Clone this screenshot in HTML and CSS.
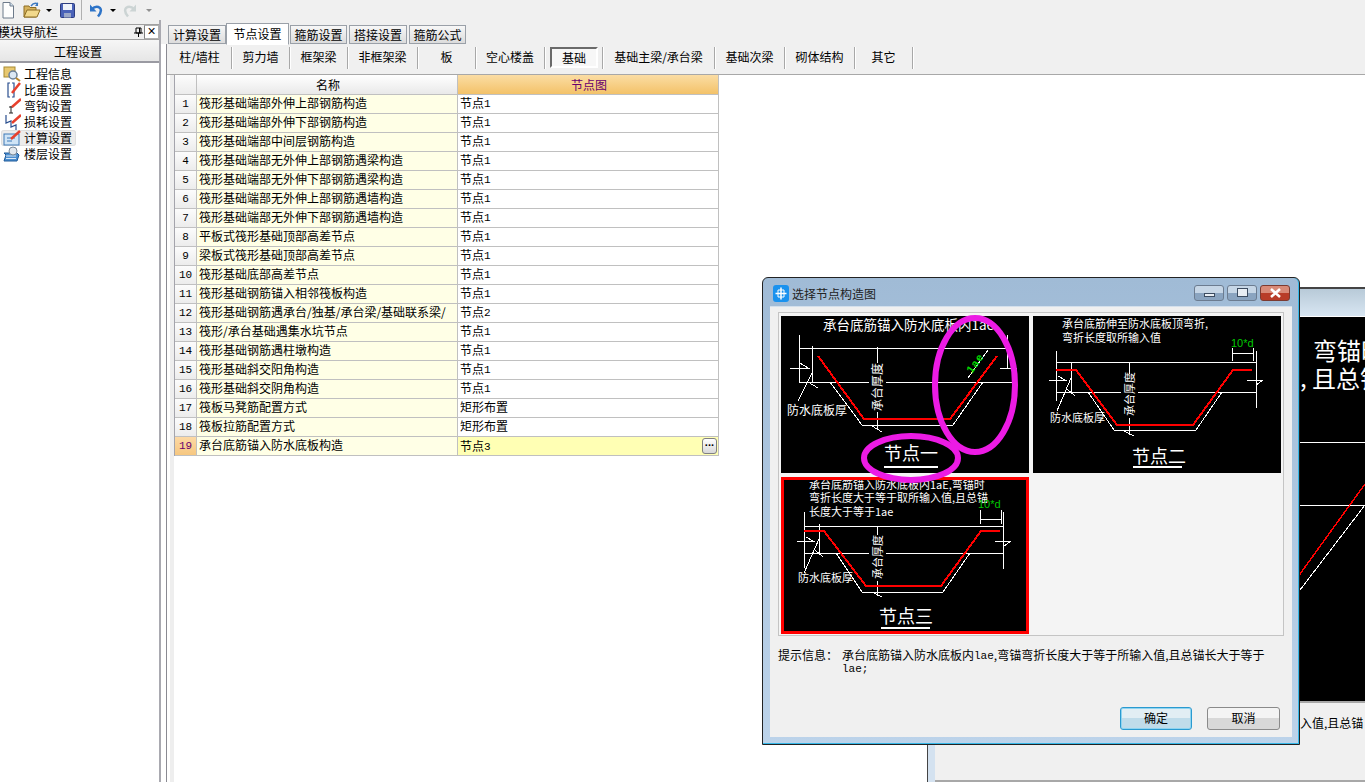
FILE: index.html
```html
<!DOCTYPE html>
<html lang="zh-CN">
<head>
<meta charset="utf-8">
<title>工程设置</title>
<link rel="stylesheet" href="styles.css">
</head>
<body>
<div class="app">
  <header class="toolbar">
    <svg class="tb-icon tb-doc" viewBox="0 0 14 17"><path d="M2 .5H9L12.5 4V16H2Z" fill="#fdfdfd" stroke="#6d7a8a"/><path d="M9 .5V4H12.5" fill="#cfe0f0" stroke="#6d7a8a"/></svg>
    <svg class="tb-icon tb-open" viewBox="0 0 18 17"><path d="M1 15V4H6L7 5.500H13V15Z" fill="#d6b25c" stroke="#8c6d24"/><path d="M1 15L4 8H17L14 15Z" fill="#f2d98c" stroke="#8c6d24"/><path d="M8 4Q11 0 15 2" fill="none" stroke="#3a78c0" stroke-width="1.500"/><path d="M15 0V4H12Z" fill="#3a78c0"/></svg>
    <span class="tb-arrow tb-arrow-open"></span>
    <svg class="tb-icon tb-save" viewBox="0 0 15 15"><rect x=".5" y=".5" width="14" height="14" rx="1" fill="#4a62b8" stroke="#2c3c80"/><rect x="3" y="1" width="9" height="6" fill="#eef2fa"/><rect x="4" y="10" width="7" height="4.500" fill="#9ca8c8"/></svg>
    <span class="tb-sep"></span>
    <svg class="tb-icon tb-undo" viewBox="0 0 14 15"><path d="M2.500 6.500Q7 2 11 5Q13.500 8 9 13.500" fill="none" stroke="#2e74c8" stroke-width="2.500"/><path d="M1 1.500V8.500H7.500Z" fill="#2e74c8"/></svg>
    <span class="tb-arrow tb-arrow-undo"></span>
    <svg class="tb-icon tb-redo" viewBox="0 0 14 15"><path d="M11.500 6.500Q7 2 3 5Q.5 8 5 13.500" fill="none" stroke="#ccd4d4" stroke-width="2.500"/><path d="M13 1.500V8.500H6.500Z" fill="#ccd4d4"/></svg>
    <span class="tb-arrow tb-arrow-redo"></span>
  </header>

  <main class="main">
    <aside class="nav">
      <div class="nav-title">
        <span class="nav-title-text">模块导航栏</span>
        <svg class="nav-pin" viewBox="0 0 9 10"><path d="M2 1H7V6H2ZM0 6H9M4.500 6V10M5.500 1V6" fill="none" stroke="#000"/></svg>
        <span class="nav-close">×</span>
      </div>
      <div class="nav-head">工程设置</div>
      <ul class="nav-list">
        <li class="nav-item">
          <svg class="nav-icon" viewBox="0 0 18 16"><rect x="1" y="1" width="11" height="10" fill="#e8c870" stroke="#a88a30"/><circle cx="10" cy="9" r="4" fill="#dce8f4" stroke="#6a7f98" stroke-width="1.500"/><path d="M13 12L17 15" stroke="#b8862c" stroke-width="2"/></svg>
          工程信息
        </li>
        <li class="nav-item">
          <svg class="nav-icon" viewBox="0 0 18 16"><path d="M7 1H5V15H7M9 1H11V15H9" fill="none" stroke="#2a4f8f" stroke-width="1.200"/><path d="M9 11L17 1" stroke="#e8402c" stroke-width="2.500"/></svg>
          比重设置
        </li>
        <li class="nav-item">
          <svg class="nav-icon" viewBox="0 0 18 16"><path d="M8 8V15M6 9H10M6 15H10" fill="none" stroke="#222"/><path d="M9 9L18 1" stroke="#e8402c" stroke-width="2.500"/></svg>
          弯钩设置
        </li>
        <li class="nav-item">
          <svg class="nav-icon" viewBox="0 0 18 16"><path d="M3 1V9L8 7V13L13 11V16" fill="none" stroke="#2a4f8f" stroke-width="1.200"/><path d="M9 9L18 1" stroke="#e8402c" stroke-width="2.500"/></svg>
          损耗设置
        </li>
        <li class="nav-item nav-item-on">
          <svg class="nav-icon" viewBox="0 0 18 16"><rect x="1" y="4" width="15" height="11" fill="#cfe4f6" stroke="#3f7ab8"/><path d="M4 8H12M4 11H9" stroke="#3f7ab8"/><path d="M8 9L17 1" stroke="#e8402c" stroke-width="2.500"/></svg>
          计算设置
        </li>
        <li class="nav-item">
          <svg class="nav-icon" viewBox="0 0 18 16"><path d="M1 7H14L16 9L14 15H1L3 9Z" fill="#4d8fd0" stroke="#1f5a9a"/><path d="M3 10H13M3 12.500H13" stroke="#dceaf8"/><circle cx="10" cy="5" r="4" fill="#e2e8ee" stroke="#7c8a98"/></svg>
          楼层设置
        </li>
      </ul>
    </aside>

    <section class="pane">
      <nav class="tabs">
        <span class="tab tab-a">计算设置</span>
        <span class="tab tab-b tab-on">节点设置</span>
        <span class="tab tab-c">箍筋设置</span>
        <span class="tab tab-d">搭接设置</span>
        <span class="tab tab-e">箍筋公式</span>
      </nav>
      <div class="tab-body">
        <div class="subbar">
          <span class="sub sub-64">柱/墙柱</span>
          <span class="sub sub-58">剪力墙</span>
          <span class="sub sub-58">框架梁</span>
          <span class="sub sub-70">非框架梁</span>
          <span class="sub sub-58">板</span>
          <span class="sub sub-69">空心楼盖</span>
          <span class="sub sub-58"><span class="sub-on">基础</span></span>
          <span class="sub sub-112">基础主梁/承台梁</span>
          <span class="sub sub-70">基础次梁</span>
          <span class="sub sub-70">砌体结构</span>
          <span class="sub sub-58">其它</span>
        </div>
        <div class="grid-wrap">
          <table class="grid">
            <thead>
              <tr><th class="c-num"></th><th class="c-name">名称</th><th class="c-val c-val-on">节点图</th></tr>
            </thead>
            <tbody>
              <tr><td class="c-num">1</td><td class="c-name">筏形基础端部外伸上部钢筋构造</td><td class="c-val">节点<span class="lat">1</span></td></tr>
              <tr><td class="c-num">2</td><td class="c-name">筏形基础端部外伸下部钢筋构造</td><td class="c-val">节点<span class="lat">1</span></td></tr>
              <tr><td class="c-num">3</td><td class="c-name">筏形基础端部中间层钢筋构造</td><td class="c-val">节点<span class="lat">1</span></td></tr>
              <tr><td class="c-num">4</td><td class="c-name">筏形基础端部无外伸上部钢筋遇梁构造</td><td class="c-val">节点<span class="lat">1</span></td></tr>
              <tr><td class="c-num">5</td><td class="c-name">筏形基础端部无外伸下部钢筋遇梁构造</td><td class="c-val">节点<span class="lat">1</span></td></tr>
              <tr><td class="c-num">6</td><td class="c-name">筏形基础端部无外伸上部钢筋遇墙构造</td><td class="c-val">节点<span class="lat">1</span></td></tr>
              <tr><td class="c-num">7</td><td class="c-name">筏形基础端部无外伸下部钢筋遇墙构造</td><td class="c-val">节点<span class="lat">1</span></td></tr>
              <tr><td class="c-num">8</td><td class="c-name">平板式筏形基础顶部高差节点</td><td class="c-val">节点<span class="lat">1</span></td></tr>
              <tr><td class="c-num">9</td><td class="c-name">梁板式筏形基础顶部高差节点</td><td class="c-val">节点<span class="lat">1</span></td></tr>
              <tr><td class="c-num">10</td><td class="c-name">筏形基础底部高差节点</td><td class="c-val">节点<span class="lat">1</span></td></tr>
              <tr><td class="c-num">11</td><td class="c-name">筏形基础钢筋锚入相邻筏板构造</td><td class="c-val">节点<span class="lat">1</span></td></tr>
              <tr><td class="c-num">12</td><td class="c-name">筏形基础钢筋遇承台/独基/承台梁/基础联系梁/</td><td class="c-val">节点<span class="lat">2</span></td></tr>
              <tr><td class="c-num">13</td><td class="c-name">筏形/承台基础遇集水坑节点</td><td class="c-val">节点<span class="lat">1</span></td></tr>
              <tr><td class="c-num">14</td><td class="c-name">筏形基础钢筋遇柱墩构造</td><td class="c-val">节点<span class="lat">1</span></td></tr>
              <tr><td class="c-num">15</td><td class="c-name">筏形基础斜交阳角构造</td><td class="c-val">节点<span class="lat">1</span></td></tr>
              <tr><td class="c-num">16</td><td class="c-name">筏形基础斜交阴角构造</td><td class="c-val">节点<span class="lat">1</span></td></tr>
              <tr><td class="c-num">17</td><td class="c-name">筏板马凳筋配置方式</td><td class="c-val">矩形布置</td></tr>
              <tr><td class="c-num">18</td><td class="c-name">筏板拉筋配置方式</td><td class="c-val">矩形布置</td></tr>
              <tr class="row-on"><td class="c-num">19</td><td class="c-name">承台底筋锚入防水底板构造</td><td class="c-val"><div class="val-edit"><span>节点<span class="lat">3</span></span><span class="dots">···</span></div></td></tr>
            </tbody>
          </table>
        </div>
      </div>
    </section>
  </main>
</div>

<div class="backwin">
  <div class="backwin-title"></div>
  <div class="backwin-art">
    <svg class="art" width="430" height="384" viewBox="0 0 430 384">
      <text class="t-big" x="378" y="43">弯锚时</text>
      <text class="t-big" x="365" y="70">,</text>
      <text class="t-big" x="377" y="71">且总锚</text>
      <path class="w" d="M300 125H430M300 188H430"/>
      <path class="r" d="M300 347L430 167"/>
      <path class="w" d="M340 273H365L430 188"/>
    </svg>
  </div>
  <div class="backwin-foot">入值,且总锚</div>
</div>

<div class="dialog">
  <div class="dlg-title">
    <svg class="dlg-icon" viewBox="0 0 16 17"><rect width="16" height="17" rx="3" fill="#1a92ee"/><path d="M8 2.500V14.500M2.500 8.500H13.500" stroke="#fff" stroke-width="1.500"/><path d="M5 5H11V12H5Z" fill="none" stroke="#fff"/></svg>
    <span class="dlg-name">选择节点构造图</span>
    <span class="win-btns">
      <span class="win-btn"><span class="g-min"></span></span>
      <span class="win-btn"><span class="g-max"></span></span>
      <span class="win-btn win-close"><svg class="g-close" viewBox="0 0 13 10"><path d="M2 1L11 9M11 1L2 9" stroke="#fff" stroke-width="2.500"/></svg></span>
    </span>
  </div>
  <div class="dlg-body">
    <div class="cards">
      <div class="card">
        <svg class="art" width="248" height="157" viewBox="0 0 248 157">
          <text class="t13" x="42" y="14">承台底筋锚入防水底板内1ae</text>
          <path class="w" d="M18 32H226M18 66H231M18 19V67M226 19V52M9 52H27L19 47M219 52H236M31 30V67M27 66L37 72M31 57L17 85"/>
          <path class="w" d="M49 66L81 109H172L202 66M96 31V114M91 110L101 116"/>
          <path class="r2" d="M37 40L83 103H169L216 40"/>
          <rect class="k" x="88" y="47" width="17" height="49"/>
          <text class="t12" transform="translate(101 95) rotate(-90)">承台厚度</text>
          <text class="t12" x="6" y="99">防水底板厚</text>
          <path class="w" d="M187 62L207 34"/>
          <text class="gt" transform="translate(191 58) rotate(-55)">1ae</text>
          <text class="t18" x="103" y="144">节点一</text>
          <path class="w2" d="M103 151H157"/>
        </svg>
      </div>
      <div class="card">
        <svg class="art" width="248" height="157" viewBox="0 0 248 157">
          <text class="t11" x="29" y="12">承台底筋伸至防水底板顶弯折,</text>
          <text class="t11" x="29" y="26">弯折长度取所输入值</text>
          <text class="gt2" x="198" y="31">10*d</text>
          <path class="w" d="M199 32V45M220 32V45M199 37H220M23 46H223M23 76H223M23 35V85M223 35V92M16 64H32L25 60M214 64H230L223 69"/>
          <path class="w" d="M55 76L81 114H163L189 76M96 46V119M91 115L101 120M38 46V76M34 73L42 80M38 62L24 95"/>
          <path class="r2" d="M23 54H43L84 109H160L200 54H219"/>
          <rect class="k" x="88" y="58" width="17" height="44"/>
          <text class="t11" transform="translate(101 100) rotate(-90)">承台厚度</text>
          <text class="t11" x="17" y="106">防水底板厚</text>
          <text class="t18" x="99" y="147">节点二</text>
          <path class="w2" d="M100 151H149"/>
        </svg>
      </div>
      <div class="card card-on">
        <svg class="art art-on" width="248" height="157" viewBox="0 0 248 157">
          <text class="t11" x="28" y="12">承台底筋锚入防水底板内1aE,弯锚时</text>
          <text class="t11" x="28" y="25">弯折长度大于等于取所输入值,且总锚</text>
          <text class="t11" x="28" y="39">长度大于等于1ae</text>
          <text class="gt2" x="197" y="31">10*d</text>
          <path class="w" d="M199 33V47M220 33V47M199 42H220M23 49H222M23 76H222M23 35V91M222 35V92M16 64H32L25 60M214 64H230L223 69"/>
          <path class="w" d="M55 76L81 115H162L189 76M96 49V119M91 115L101 120M38 47V76M34 73L42 80M38 62L23 96"/>
          <path class="r2" d="M23 54H43L85 109H160L200 54H219"/>
          <rect class="k" x="88" y="58" width="17" height="46"/>
          <text class="t11" transform="translate(101 102) rotate(-90)">承台厚度</text>
          <text class="t11" x="17" y="105">防水底板厚</text>
          <text class="t18" x="98" y="146">节点三</text>
          <path class="w2" d="M100 151H149"/>
        </svg>
      </div>
    </div>
    <div class="hint">
      <span class="hint-label">提示信息：</span>
      <span class="hint-text">承台底筋锚入防水底板内<span class="lat">lae</span>,弯锚弯折长度大于等于所输入值,且总锚长大于等于<br><span class="lat">lae;</span></span>
    </div>
    <div class="dlg-foot">
      <span class="btn btn-on">确定</span>
      <span class="btn">取消</span>
    </div>
  </div>
  <svg class="marks" width="536" height="466" viewBox="0 0 536 466">
    <ellipse class="mark" cx="212" cy="107" rx="40" ry="67"/>
    <ellipse class="mark" cx="148" cy="180" rx="47" ry="22"/>
  </svg>
</div>
</body>
</html>
```
FILE: styles.css
```css
* { box-sizing: border-box; }
html, body { margin: 0; height: 782px; }
body {
  position: relative;
  width: 1365px;
  overflow: hidden;
  background: #fff;
  color: #000;
  font: 12px/16px "Noto Sans CJK SC", "Liberation Sans", sans-serif;
}
.app { display: flex; flex-direction: column; height: 782px; }
.lat { font: 11px/12px "Liberation Mono", monospace; vertical-align: 1px; }

/* toolbar */
.toolbar { display: flex; align-items: center; height: 20px; background: #f0f0f0; flex: none; }
.tb-icon { display: block; flex: none; }
.tb-doc { width: 14px; height: 17px; margin-left: 1px; }
.tb-open { width: 18px; height: 17px; margin-left: 8px; }
.tb-save { width: 15px; height: 15px; margin-left: 8px; }
.tb-undo { width: 14px; height: 15px; margin-left: 7px; }
.tb-redo { width: 14px; height: 15px; margin-left: 7px; }
.tb-sep { width: 1px; height: 20px; background: #b0b0b0; margin-left: 6px; }
.tb-arrow { width: 0; height: 0; border: 3px solid transparent; border-top: 3px solid #000; border-bottom: 0; flex: none; }
.tb-arrow-open { margin-left: 5px; }
.tb-arrow-undo { margin-left: 7px; }
.tb-arrow-redo { margin-left: 9px; border-top-color: #909090; }

/* main split */
.main { display: flex; flex: 1; min-height: 0; background: #fff; }
.nav { width: 161px; flex: none; border-right: 2px solid #a9a9b0; display: flex; flex-direction: column; }
.nav-title { display: flex; align-items: center; height: 20px; background: #f0f0f0; border-top: 4px solid #f0f0f0; box-shadow: inset 0 1px 0 #a0a0a0; border-bottom: 1px solid #a0a0a0; overflow: hidden; }
.nav-title-text { margin-left: -2px; white-space: nowrap; }
.nav-pin { width: 9px; height: 10px; margin-left: 76px; flex: none; }
.nav-close { width: 15px; height: 14px; margin-left: 1px; flex: none; background: #fff; border: 1px solid #b0b0b0; border-left-color: #808080; text-align: center; font: 14px/11px "Liberation Sans", sans-serif; }
.nav-head { height: 23px; line-height: 24px; text-align: center; background: linear-gradient(#f6f6f6, #e6e6e6); border-bottom: 2px solid #9a9aa2; padding-right: 3px; }
.nav-list { list-style: none; margin: 3px 0 0; padding: 0; }
.nav-item { display: flex; align-items: center; height: 16px; padding-left: 3px; width: 75px; white-space: nowrap; }
.nav-item-on { background: #ececec; border-radius: 3px; box-shadow: inset 0 0 0 1px #dedede; margin-left: 1px; padding-left: 2px; }
.nav-icon { width: 18px; height: 16px; margin-right: 3px; flex: none; }

/* right pane */
.pane { flex: 1; min-width: 0; display: flex; flex-direction: column; padding-left: 5px; }
.tabs { display: flex; align-items: flex-end; height: 24px; background: #f0f0f0; margin-left: -5px; padding-left: 7px; flex: none; position: relative; z-index: 1; }
.tab { height: 19px; line-height: 17px; text-align: center; background: linear-gradient(#f7f7f7, #dcdcdc); border: 1px solid #9aa0a8; white-space: nowrap; }
.tab-a { width: 58px; }
.tab-b { width: 63px; }
.tab-c { width: 57px; margin-left: 1px; }
.tab-d { width: 58px; margin-left: 2px; }
.tab-e { width: 57px; margin-left: 2px; }
.tab-on { height: 22px; line-height: 20px; margin-bottom: -1px; background: #fff; border-bottom-color: #fff; }
.tab-body { flex: 1; min-height: 0; display: flex; flex-direction: column; border-left: 1px solid #8a8a92; border-top: 1px solid #a0a0a0; margin-top: -1px; }
.subbar { display: flex; align-items: center; height: 31px; background: #f0f0f0; border-bottom: 1px solid #a8a8a8; padding: 0 0 3px 1px; flex: none; }
.sub { height: 22px; line-height: 20px; text-align: center; border-right: 1px solid #a8a8a8; box-shadow: 1px 0 0 #fff; white-space: nowrap; flex: none; display: flex; justify-content: center; }
.sub-58 { width: 58px; }
.sub-64 { width: 64px; }
.sub-69 { width: 69px; }
.sub-70 { width: 70px; }
.sub-112 { width: 112px; }
.sub-on { width: 48px; height: 21px; margin-left: 1px; line-height: 17px; background: #f7f7f7; border: 2px solid; border-color: #6a6a6a #fff #fff #6a6a6a; }

/* grid */
.grid-wrap { flex: 1; min-height: 0; margin-left: 3px; border-left: 4px solid #eee; background: #fff; }
.grid { border-collapse: separate; border-spacing: 0; table-layout: fixed; width: 545px; border-left: 1px solid #a4a4ac; }
.grid th, .grid td { height: 19px; padding: 0 0 0 2px; border-right: 1px solid #c0c0c0; border-bottom: 1px solid #c0c0c0; font-weight: 400; white-space: nowrap; overflow: hidden; line-height: 16px; }
.grid td { padding-bottom: 2px; }
.grid th { height: 20px; text-align: center; background: linear-gradient(#fff, #e9e9e9); }
.grid th.c-val-on { background: linear-gradient(#fbdda4, #f3c269); color: #68006e; }
.grid .c-num { width: 22px; text-align: center; padding: 0; background: linear-gradient(#fcfcfc, #ececec); font: 11px/17px "Liberation Mono", monospace; }
.grid .c-name { width: 261px; }
.grid td.c-name { background: #ffffe6; }
.grid .c-val { width: 261px; }
.row-on td.c-num { background: linear-gradient(#fdd9a4, #f6c780); color: #68006e; }
.row-on td.c-val { background: #ffffb4; padding: 0 1px 0 2px; }
.val-edit { display: flex; justify-content: space-between; align-items: center; height: 18px; padding-bottom: 1px; }
.dots { width: 15px; height: 16px; text-align: center; font: 700 11px/12px "Liberation Sans", sans-serif; letter-spacing: -0.5px; background: linear-gradient(#fff, #d8d8d8); border: 1px solid #808080; border-radius: 3px; }

/* window behind the dialog */
.backwin { position: absolute; left: 927px; top: 287px; width: 438px; height: 495px; display: flex; flex-direction: column; background: #d4e2f0; border-left: 1px solid #444; border-top: 2px solid #444; }
.backwin-title { height: 27px; flex: none; background: linear-gradient(#b8cad8, #d8e6f2); }
.backwin-art { height: 385px; flex: none; padding-left: 7px; background: #d4e2f0; border-top: 1px solid #fff; }
.backwin-foot { flex: 1; margin-left: 7px; padding-left: 365px; background: #f0f0f0; border-top: 2px solid #a8a8a8; border-bottom: 2px solid #a8a8a8; line-height: 40px; white-space: nowrap; overflow: hidden; }

/* dialog */
.dialog { position: absolute; left: 762px; top: 277px; width: 538px; height: 468px; display: flex; flex-direction: column; border: 1px solid #222; border-radius: 6px 6px 0 0; background: linear-gradient(#a0bbd6, #bcd3ea); box-shadow: inset 0 -1px 0 #35b8e8, inset -1px 0 0 #35b8e8; padding: 0 7px 7px; }
.dlg-title { display: flex; align-items: center; height: 28px; padding-top: 3px; flex: none; margin-left: 3px; }
.dlg-icon { width: 16px; height: 17px; flex: none; }
.dlg-name { margin-left: 3px; color: #222; }
.win-btns { display: flex; gap: 3px; margin-left: auto; margin-right: 2px; margin-top: -2px; }
.win-btn { display: flex; align-items: center; justify-content: center; width: 30px; height: 16px; border: 1px solid #6c7c90; border-radius: 3px; background: linear-gradient(#c6d6e6 50%, #8aa4c0 50%); }
.win-close { background: linear-gradient(#d88a78 50%, #b83c28 50%); border-color: #7c3a30; }
.g-close { width: 13px; height: 10px; display: block; }
.g-min { width: 11px; height: 4px; margin-top: 4px; background: #e8eef4; border: 1px solid #3c4c60; }
.g-max { width: 11px; height: 9px; background: #e8eef4; border: 1px solid #3c4c60; box-shadow: inset 0 0 0 1px #e8eef4; }
.dlg-body { flex: 1; min-height: 0; display: flex; flex-direction: column; background: #f0f0f0; padding: 5px 8px 7px; border-top: 1px solid #d4e0ec; }
.cards { display: grid; grid-template-columns: 248px 248px; grid-auto-rows: 157px; gap: 4px; width: 506px; height: 324px; padding: 3px 2px; background: #f4f4f4; border: 1px solid #c4c4c4; flex: none; }
.card { background: #000; overflow: hidden; }
.card-on { border: 3px solid #f00; }
.art { display: block; background: #000; }
.art-on { margin: -3px; }
.hint { display: flex; margin-top: 13px; line-height: 12px; flex: none; }
.hint-label { width: 64px; flex: none; }
.hint-text { width: 430px; white-space: nowrap; }
.dlg-foot { display: flex; justify-content: flex-end; gap: 15px; margin-top: auto; padding-right: 4px; flex: none; }
.btn { width: 73px; height: 23px; line-height: 20px; text-align: center; border: 1px solid #8a8a8a; border-radius: 3px; background: linear-gradient(#f4f4f4 50%, #d8d8d8 50%); }
.btn-on { width: 72px; border: 1px solid #2a9ad0; box-shadow: inset 0 0 0 1px #8fd4f0; background: linear-gradient(#e2eef4 50%, #c0dcea 50%); }
.marks { position: absolute; left: 0; top: 0; pointer-events: none; }
.mark { fill: none; stroke: #ec1be4; stroke-width: 6; }

/* drawing styles */
.w { fill: none; stroke: #fff; stroke-width: 1; shape-rendering: crispEdges; }
.w2 { fill: none; stroke: #fff; stroke-width: 2; shape-rendering: crispEdges; }
.r { fill: none; stroke: #f00; stroke-width: 1.5; shape-rendering: crispEdges; }
.r2 { fill: none; stroke: #f00; stroke-width: 2; shape-rendering: crispEdges; }
.k { fill: #000; }
.t-big { fill: #fff; font-size: 24px; }
.t11 { fill: #fff; font-size: 11px; }
.t12 { fill: #fff; font-size: 12px; }
.t13 { fill: #fff; font-size: 13.5px; }
.t18 { fill: #fff; font-size: 18px; }
.gt { fill: #00d800; font: 700 11px "Liberation Sans", sans-serif; letter-spacing: 1px; }
.gt2 { fill: #00c800; font: 11px "Liberation Sans", sans-serif; }
```
